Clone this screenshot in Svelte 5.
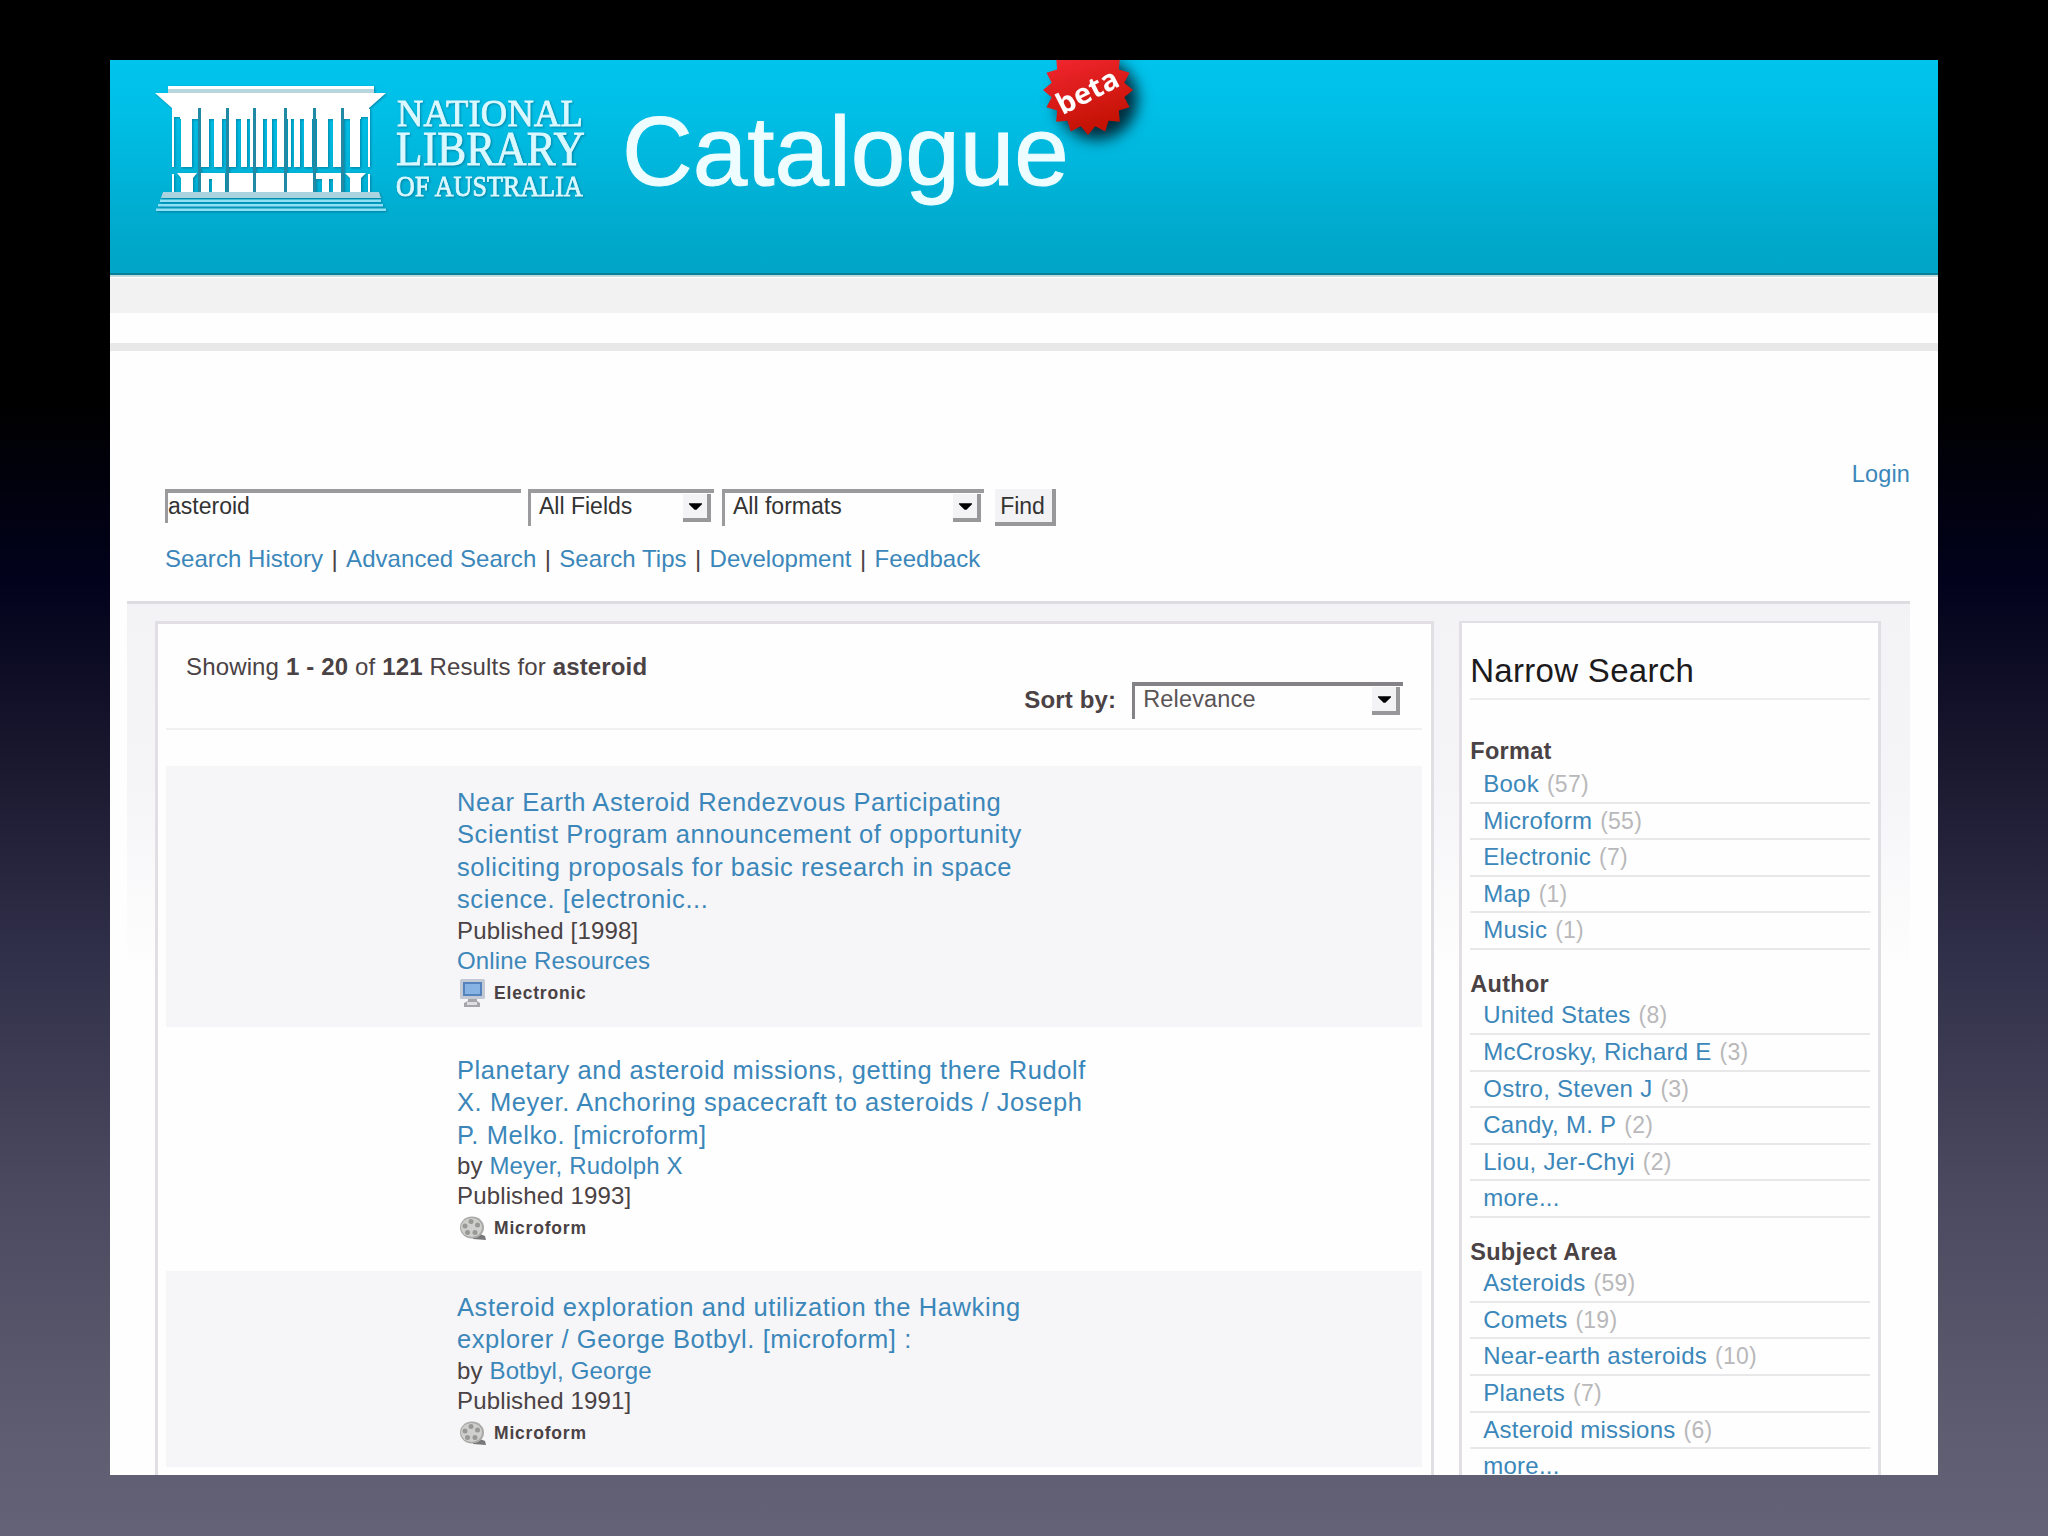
<script lang="ts">
  type Facet = { label: string; count?: number };

  const links = ['Search History', 'Advanced Search', 'Search Tips', 'Development', 'Feedback'];

  const results = [
    {
      title: [
        'Near Earth Asteroid Rendezvous Participating',
        'Scientist Program announcement of opportunity',
        'soliciting proposals for basic research in space',
        'science. [electronic...'
      ],
      published: '[1998]',
      online: true,
      format: 'Electronic'
    },
    {
      title: [
        'Planetary and asteroid missions, getting there Rudolf',
        'X. Meyer. Anchoring spacecraft to asteroids / Joseph',
        'P. Melko. [microform]'
      ],
      author: 'Meyer, Rudolph X',
      published: '1993]',
      format: 'Microform'
    },
    {
      title: [
        'Asteroid exploration and utilization the Hawking',
        'explorer / George Botbyl. [microform] :'
      ],
      author: 'Botbyl, George',
      published: '1991]',
      format: 'Microform'
    }
  ];

  const groups: { name: string; items: Facet[] }[] = [
    {
      name: 'Format',
      items: [
        { label: 'Book', count: 57 },
        { label: 'Microform', count: 55 },
        { label: 'Electronic', count: 7 },
        { label: 'Map', count: 1 },
        { label: 'Music', count: 1 }
      ]
    },
    {
      name: 'Author',
      items: [
        { label: 'United States', count: 8 },
        { label: 'McCrosky, Richard E', count: 3 },
        { label: 'Ostro, Steven J', count: 3 },
        { label: 'Candy, M. P', count: 2 },
        { label: 'Liou, Jer-Chyi', count: 2 },
        { label: 'more...' }
      ]
    },
    {
      name: 'Subject Area',
      items: [
        { label: 'Asteroids', count: 59 },
        { label: 'Comets', count: 19 },
        { label: 'Near-earth asteroids', count: 10 },
        { label: 'Planets', count: 7 },
        { label: 'Asteroid missions', count: 6 },
        { label: 'more...' }
      ]
    }
  ];

  // 16-pointed star for the beta badge
  const star = Array.from({ length: 32 }, (_, i) => {
    const r = i % 2 ? 37 : 45;
    const a = (i * Math.PI) / 16;
    return `${(60 + r * Math.sin(a)).toFixed(1)},${(60 - r * Math.cos(a)).toFixed(1)}`;
  }).join(' ');

  let query = $state('asteroid');
</script>

{#snippet dropdown(text: string, kind: string)}
  <div class="select {kind}" role="combobox" aria-expanded="false" aria-controls="none" tabindex="0">
    <span>{text}</span>
    <i class="arrow"><svg viewBox="0 0 14 7"><path d="M0 0h14v1L8 7H6L0 1z" /></svg></i>
  </div>
{/snippet}

<div class="slide">
  <div class="window">
    <header>
      <svg class="logo" viewBox="0 0 440 134" width="440" height="134">
        <g fill="#fff">
          <path d="M13 3h206v6H13z" />
          <path d="M13 6h206v4H13z" fill="#b9d6dd" />
          <path d="M0 10h231l-17 15v9h-8v2H25v-2h-8v-9z" />
          <path d="M17 26h2v58h-2zM213 26h2v58h-2zM26 34h11v50H26zM195 34h10v50h-10z" />
          <path d="M46 30h8v54h-8zM59 30h8v54h-8zM74 30h7v54h-7zM86 30h6v54h-6zM95 30h3v54h-3zM101 30h7v54h-7zM112 30h5v54h-5zM122 30h7v54h-7zM133 30h3v54h-3zM139 30h6v54h-6zM149 30h8v54h-8zM162 30h11v54h-11zM178 30h8v54h-8z" />
          <path d="M22 90h20l-4 5v14H26V95zM46 90h24v19H57V96h-3v13h-8zM74 90h24v19H74zM101 90h28v19h-28zM132 90h26v19h-26zM161 90h25v19h-8V96h-4v13h-7V96h-6zM190 90h21l-5 5v14h-11V95zM17 91h2v18h-2zM213 91h2v18h-2z" />
        </g>
        <g fill="#2189a4">
          <path d="M43 25h3v84h-3zM71 25h3v84h-3zM98 25h3v84h-3zM129 25h3v84h-3zM158 25h3v84h-3zM186 25h3v84h-3z" />
        </g>
        <path d="M8 109h216l2 6H6z" fill="#a9d3de" />
        <path d="M5 116.500h221v2.500H5zM3 121h225v2.500H3zM1 125.500h230v2.500H1z" fill="#8fe0f4" />
        <g fill="#d9f8ff" stroke="#d9f8ff" stroke-width=".9">
          <text x="242" y="43" font-size="38" textLength="186" lengthAdjust="spacingAndGlyphs">NATIONAL</text>
          <text x="241" y="82" font-size="48" textLength="189" lengthAdjust="spacingAndGlyphs">LIBRARY</text>
          <text x="241" y="113" font-size="29" textLength="187" lengthAdjust="spacingAndGlyphs">OF AUSTRALIA</text>
        </g>
      </svg>
      <h1>Catalogue</h1>
      <svg class="beta" viewBox="0 0 120 120" width="120" height="120">
        <defs>
          <linearGradient id="red" x1="0" y1="0" x2="0.300" y2="1">
            <stop offset="0" stop-color="#fb2a38" />
            <stop offset="1" stop-color="#c41204" />
          </linearGradient>
        </defs>
        <polygon points={star} fill="url(#red)" />
        <text x="59" y="71" transform="rotate(-27 60 60)" text-anchor="middle">beta</text>
      </svg>
    </header>
    <div class="band"></div>
    <div class="rule"></div>

    <div class="login"><a href="#login">Login</a></div>

    <form class="search" onsubmit={(e) => e.preventDefault()}>
      <input type="text" bind:value={query} aria-label="Search" />
      {@render dropdown('All Fields', 'fields')}
      {@render dropdown('All formats', 'formats')}
      <button type="submit">Find</button>
    </form>

    <nav>
      {#each links as link, i}
        {#if i > 0}<span class="bar">|</span>{/if}<a href="#nav">{link}</a>
      {/each}
    </nav>

    <div class="content">
      <main>
        <p class="summary">Showing <b>1 - 20</b> of <b>121</b> Results for <b>asteroid</b></p>
        <div class="sort">
          <b>Sort by:</b>
          {@render dropdown('Relevance', 'relevance')}
        </div>
        {#each results as r}
          <article>
            <h2>
              {#each r.title as line}<a href="#record">{line}</a>{/each}
            </h2>
            {#if r.author}<p>by <a href="#author">{r.author}</a></p>{/if}
            <p>Published {r.published}</p>
            {#if r.online}<p><a href="#online">Online Resources</a></p>{/if}
            <div class="format">
              {#if r.format === 'Electronic'}
                <svg viewBox="0 0 28 30" width="28" height="30">
                  <rect x="1" y="1" width="25" height="20" rx="1.500" fill="#c3cad3" />
                  <rect x="4" y="4" width="19" height="14" fill="#5584bd" />
                  <rect x="6" y="6" width="15" height="10" fill="#86b3e4" />
                  <path d="M9 21h9v2l3 2v4H5v-4l4-2z" fill="#a6a6aa" />
                  <path d="M8 24h10v3H8z" fill="#dededf" />
                </svg>
              {:else}
                <svg viewBox="0 0 28 26" width="28" height="26">
                  <path d="M14 20l7-1 5 2 1 4-13-1z" fill="#77777a" />
                  <ellipse cx="13" cy="12.500" rx="12" ry="11" fill="#a9a9a7" />
                  <ellipse cx="12.500" cy="12.500" rx="10.500" ry="9.500" fill="#cfcfcb" />
                  <g fill="#989896">
                    <circle cx="12" cy="6.500" r="2.500" />
                    <circle cx="18.500" cy="10" r="2.500" />
                    <circle cx="16" cy="17.500" r="2.500" />
                    <circle cx="8.500" cy="17.500" r="2.500" />
                    <circle cx="6" cy="11" r="2.500" />
                  </g>
                </svg>
              {/if}
              <b>{r.format}</b>
            </div>
          </article>
        {/each}
      </main>

      <aside>
        <h3>Narrow Search</h3>
        {#each groups as g}
          <section>
            <h4>{g.name}</h4>
            <ul>
              {#each g.items as item}
                <li><a href="#facet">{item.label}</a>{#if item.count}<span>({item.count})</span>{/if}</li>
              {/each}
            </ul>
          </section>
        {/each}
      </aside>
    </div>
  </div>
</div>

<style>
  :global(body) {
    background: #000;
  }
  .slide {
    box-sizing: border-box;
    width: 2048px;
    height: 1536px;
    padding: 60px 110px 0;
    background: linear-gradient(#000 0, #000 400px, #02021c 580px, #1b1930 770px, #302f49 950px, #4a495f 1190px, #5e5d71 1440px, #636276 1536px);
    font: 24px/30px 'Liberation Sans', Arial, sans-serif;
    letter-spacing: 0.15px;
    color: #4a4244;
  }
  .window {
    height: 1414.500px;
    overflow: hidden;
    background: #fefefe;
  }
  a {
    color: #3b87ba;
    text-decoration: none;
  }
  p,
  h1,
  h2,
  h3,
  h4,
  ul {
    margin: 0;
    padding: 0;
    font-weight: 400;
  }
  header {
    position: relative;
    box-sizing: border-box;
    display: flex;
    height: 217px;
    padding: 23px 0 0 45px;
    overflow: hidden;
    background: linear-gradient(#00c4ed, #00c0e8 20%, #00a7c9 88%, #00a5c7);
    border-bottom: 2px solid #c4dcdd;
    box-shadow: inset 0 -2px #087f96;
  }
  .logo {
    flex: none;
    font-family: 'Liberation Serif', serif;
    filter: drop-shadow(1px 1px 1px rgba(0, 80, 110, 0.5));
  }
  h1 {
    margin: 12px 0 0 27px;
    font-size: 98px;
    line-height: 112px;
    letter-spacing: 0;
    color: #eefdff;
    -webkit-text-stroke: 1px #eefdff;
  }
  .beta {
    position: absolute;
    left: 918px;
    top: -30px;
    overflow: visible;
    filter: drop-shadow(9px 9px 7px rgba(0, 20, 30, 0.85));
  }
  .beta text {
    font: bold 29px 'Open Sans', sans-serif;
    fill: #fff;
  }
  .band {
    height: 35px;
    margin-top: 1px;
    background: #f2f2f2;
  }
  .rule {
    height: 8px;
    margin-top: 30px;
    background: #e8e8e8;
  }
  .login {
    padding: 108px 28px 0 0;
    text-align: right;
    font-size: 23.500px;
  }
  .search {
    display: flex;
    align-items: flex-start;
    height: 38px;
    padding-left: 55px;
    color: #333;
    font-size: 23px;
    letter-spacing: 0;
  }
  .search input {
    box-sizing: border-box;
    width: 356px;
    height: 34px;
    margin: 0 7px 0 0;
    padding: 0 0 3px;
    background: #fefefe;
    border: solid;
    border-width: 4px 0 0 3px;
    border-color: #9b9a9c #fefefe #fefefe #9b9a9c;
    outline: none;
    font: inherit;
    color: #333;
  }
  .select {
    box-sizing: border-box;
    display: flex;
    justify-content: space-between;
    height: 37px;
    padding: 1px 3px 0 8px;
    border: solid #9b9a9c;
    border-width: 4px 0 0 3px;
    line-height: 24px;
    color: #333;
  }
  .fields {
    width: 186px;
    margin-right: 8px;
  }
  .formats {
    width: 262px;
    margin-right: 11px;
  }
  .relevance {
    width: 271px;
    color: #5a5456;
    border-color: #848286;
    font-size: 23.500px;
  }
  .arrow {
    box-sizing: border-box;
    display: flex;
    align-items: center;
    justify-content: center;
    width: 28px;
    height: 28px;
    background: #f3f2f4;
    border: solid #98979a;
    border-width: 0 4px 4px 0;
  }
  .arrow svg {
    width: 13px;
    height: 7px;
    fill: #000;
  }
  button {
    box-sizing: border-box;
    width: 61px;
    height: 37px;
    padding: 0 2px 0 0;
    background: #f3f2f4;
    border: solid #98979a;
    border-width: 0 4px 4px 0;
    font: inherit;
    color: #333;
  }
  nav {
    display: flex;
    padding: 17px 0 0 55px;
    height: 57px;
    letter-spacing: 0.05px;
  }
  .bar {
    width: 23px;
    text-align: center;
  }
  .content {
    display: flex;
    align-items: flex-start;
    gap: 23px;
    margin: 0 28px 0 17px;
    padding: 17px 29px 0 28px;
    border-top: 3px solid #dddce0;
    background: linear-gradient(#f3f2f5 0, #f5f4f7 180px, #fefefe 370px);
  }
  main,
  aside {
    box-sizing: border-box;
    height: 900px;
    background: #fefefe;
    border: 3px solid #e1dfe3;
  }
  main {
    width: 1280px;
    padding: 28px 9px 0 8px;
  }
  .summary {
    padding: 0 20px;
    height: 30px;
  }
  .sort {
    display: flex;
    justify-content: flex-end;
    gap: 16px;
    height: 46px;
    padding-right: 19px;
    border-bottom: 2px solid #f1f0f2;
    margin-bottom: 36px;
  }
  .sort b {
    padding-top: 3px;
  }
  article {
    padding: 20px 0 20px 291px;
    height: 221px;
  }
  article:nth-of-type(2) {
    padding-top: 27px;
    height: 197px;
  }
  article:nth-of-type(3) {
    height: 156px;
  }
  article:nth-of-type(odd) {
    background: #f6f5f7;
  }
  h2 a {
    display: block;
    font-size: 25.500px;
    line-height: 32.400px;
    letter-spacing: 0.58px;
    white-space: nowrap;
  }
  .format {
    display: flex;
    align-items: center;
    gap: 7px;
    height: 34px;
    padding-left: 2px;
    font-size: 17.500px;
    letter-spacing: 0.8px;
  }
  aside {
    width: 422px;
    padding: 0 8px;
    margin-left: 2px;
    border-width: 2px 3px;
  }
  h3 {
    height: 75px;
    border-bottom: 2px solid #ededef;
    font-size: 33px;
    line-height: 96px;
    letter-spacing: 0.3px;
    color: #1c1a1c;
    white-space: nowrap;
  }
  section {
    padding-top: 18.700px;
  }
  section:first-of-type {
    padding-top: 36px;
  }
  h4 {
    height: 29.700px;
    font-weight: 700;
    font-size: 23.500px;
    letter-spacing: 0.3px;
  }
  section:first-of-type h4 {
    height: 31px;
  }
  ul {
    list-style: none;
  }
  li {
    box-sizing: border-box;
    height: 36.600px;
    padding: 2px 0 0 13px;
    border-bottom: 2px solid #e8e7ea;
    letter-spacing: 0.25px;
    white-space: nowrap;
  }
  li span {
    margin-left: 8px;
    color: #b9b8ba;
    font-size: 23px;
  }
</style>
